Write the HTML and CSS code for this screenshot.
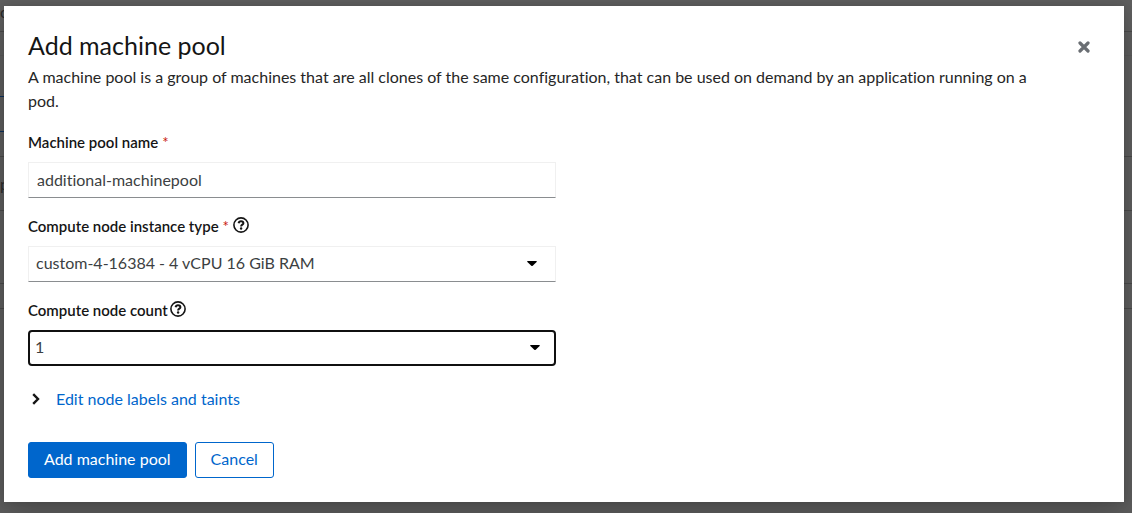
FILE: index.html
```html
<!DOCTYPE html>
<html lang="en">
<head>
  <meta charset="UTF-8">
  <meta name="viewport" content="width=device-width, initial-scale=1.0">
  <title>Add machine pool</title>
  <link rel="stylesheet" href="styles.css">
</head>
<body>
  <div class="page" aria-hidden="true">
    <div class="page-row page-title">o</div>
    <div class="page-row page-tabs"></div>
    <div class="page-row page-toolbar"><div class="toolbar-box"></div></div>
    <div class="page-row page-heading">p</div>
    <div class="page-row page-item"></div>
    <div class="page-row page-footer"></div>
  </div>

  <div class="backdrop">
    <div class="modal" role="dialog" aria-modal="true" aria-labelledby="modal-title">
      <header class="modal-header">
        <h1 class="modal-title" id="modal-title">Add machine pool</h1>
        <button class="close" type="button" aria-label="Close">
          <svg width="12" height="12" viewBox="0 0 12 12"><path d="M2 2l8 8M10 2l-8 8" fill="none" stroke="currentColor" stroke-width="3.2" stroke-linecap="round"/></svg>
        </button>
      </header>
      <p class="description">A machine pool is a group of machines that are all clones of the same configuration, that can be used on demand by an application running on a pod.</p>

      <form class="form">
        <div class="form-group">
          <div class="form-label">
            <label for="pool-name">Machine pool name</label>
            <span class="required">*</span>
          </div>
          <input class="control" id="pool-name" type="text" value="additional-machinepool">
        </div>

        <div class="form-group">
          <div class="form-label">
            <label for="instance-type">Compute node instance type</label>
            <span class="required">*</span>
            <button class="help" type="button" aria-label="Instance type help">
              <svg width="16" height="16" viewBox="0 0 16 16" fill="none" stroke="currentColor"><circle cx="8" cy="8" r="7.1" stroke-width="1.6"/><path d="M5.6 6.3C5.9 4.9 6.8 4.3 8 4.3c1.4 0 2.4.8 2.4 1.9C10.4 7.7 8.1 7.700 8.1 9.400" stroke-width="2"/><circle cx="8.1" cy="11.5" r="1.2" fill="currentColor" stroke="none"/></svg>
            </button>
          </div>
          <div class="select">
            <select class="control" id="instance-type">
              <option>custom-4-16384 - 4 vCPU 16 GiB RAM</option>
            </select>
            <svg class="caret" width="10" height="6" viewBox="0 0 10 6"><path d="M.7 0h8.6q.9.3.3 1L5.7 4.8q-.7.6-1.4 0L.4 1Q-.2.3.7 0z"/></svg>
          </div>
        </div>

        <div class="form-group">
          <div class="form-label">
            <label for="node-count">Compute node count</label>
            <button class="help" type="button" aria-label="Node count help">
              <svg width="16" height="16" viewBox="0 0 16 16" fill="none" stroke="currentColor"><circle cx="8" cy="8" r="7.1" stroke-width="1.6"/><path d="M5.6 6.3C5.9 4.9 6.8 4.3 8 4.3c1.4 0 2.4.8 2.4 1.9C10.4 7.7 8.1 7.7 8.1 9.4" stroke-width="2"/><circle cx="8.1" cy="11.5" r="1.2" fill="currentColor" stroke="none"/></svg>
            </button>
          </div>
          <div class="select select-focused">
            <select class="control" id="node-count">
              <option>1</option>
            </select>
            <svg class="caret" width="10" height="6" viewBox="0 0 10 6"><path d="M.7 0h8.6q.9.3.3 1L5.7 4.8q-.7.6-1.4 0L.4 1Q-.2.3.7 0z"/></svg>
          </div>
        </div>

        <button class="toggle" type="button" aria-expanded="false">
          <svg width="8" height="12" viewBox="0 0 8 12"><path d="M1.2 1.2L6 6l-4.800 4.800" fill="none" stroke="#151515" stroke-width="2.4"/></svg>
          Edit node labels and taints
        </button>

        <div class="actions">
          <button class="button primary" type="submit">Add machine pool</button>
          <button class="button secondary" type="button">Cancel</button>
        </div>
      </form>
    </div>
  </div>
</body>
</html>
```
FILE: styles.css
```css
* {
  box-sizing: border-box;
}

body {
  margin: 0;
  min-height: 100vh;
  font-family: Lato, sans-serif;
  font-size: 16px;
  font-variant-ligatures: none;
  line-height: 24px;
  color: #151515;
  background-color: #5e5e5e;
}

button, input, select {
  font: inherit;
  font-variant-ligatures: none;
}

/* page under the modal */
.page {
  position: absolute;
  inset: 0;
  overflow: hidden;
  color: #2a2a2a;
}

.page-row {
  border-bottom: 1px solid #4a4a4a;
}

.page-title {
  height: 32px;
}

.page-tabs {
  height: 24px;
  border-color: #595959;
}

.page-toolbar {
  height: 101px;
  padding-top: 40px;
}

.toolbar-box {
  width: 300px;
  height: 36px;
  border: 1px solid #0a2f5c;
  border-width: 1px 0;
}

.page-heading {
  height: 54px;
  padding-top: 15px;
}

.page-item {
  height: 73px;
}

.page-footer {
  height: 25px;
}

.backdrop {
  position: relative;
  padding: 6px 8px 11px 4px;
}

.modal {
  padding: 24px;
  background-color: #fff;
  box-shadow: 0 16px 32px rgba(3, 3, 3, 0.2), 0 0 8px rgba(3, 3, 3, 0.12);
}

.modal-header {
  display: flex;
  justify-content: space-between;
  align-items: flex-start;
  margin-bottom: 1px;
}

.modal-title {
  margin: 0;
  font-size: 25px;
  font-weight: 400;
  line-height: 30px;
}

.close {
  display: flex;
  padding: 11px 10px;
  margin: 0;
  border: none;
  background: none;
  color: #6a6e73;
  cursor: pointer;
}

.description {
  margin: 0 56px 17px 0;
  color: #262626;
}

.form-group {
  max-width: 528px;
  margin-bottom: 16px;
}

.form-label {
  display: flex;
  align-items: center;
  gap: 2px;
  margin-bottom: 8px;
  font-size: 15px;
  font-weight: 600;
}

.required {
  margin: 0 2px;
  font-weight: 400;
  color: #c9190b;
}

.help {
  display: flex;
  padding: 0 0 2px;
  border: none;
  background: none;
  color: #151515;
  cursor: pointer;
}

.control {
  display: block;
  width: 100%;
  height: 36px;
  padding: 0 8px 2px;
  border: 1px solid #f0f0f0;
  border-bottom-color: #8a8d90;
  border-radius: 0;
  background-color: #fff;
  color: #3c3f42;
  outline: none;
}

.select {
  position: relative;
}

.select .control {
  appearance: none;
  padding: 0 40px 2px 7px;
}

.caret {
  position: absolute;
  top: 15px;
  right: 19px;
  pointer-events: none;
}

.select-focused .control {
  padding-left: 5px;
  border: 2px solid #101010;
  border-radius: 4px;
}

.select-focused .caret {
  right: 16px;
}

.toggle {
  display: flex;
  align-items: center;
  gap: 16px;
  padding: 5px 4px 7px;
  margin-bottom: 24px;
  border: none;
  background: none;
  color: #06c;
  cursor: pointer;
}

.actions {
  display: flex;
  gap: 8px;
}

.button {
  height: 36px;
  padding: 0 15px 2px;
  border: 1px solid #06c;
  border-radius: 3px;
  cursor: pointer;
}

.primary {
  background-color: #06c;
  color: #fff;
}

.secondary {
  background-color: #fff;
  color: #06c;
}
```
